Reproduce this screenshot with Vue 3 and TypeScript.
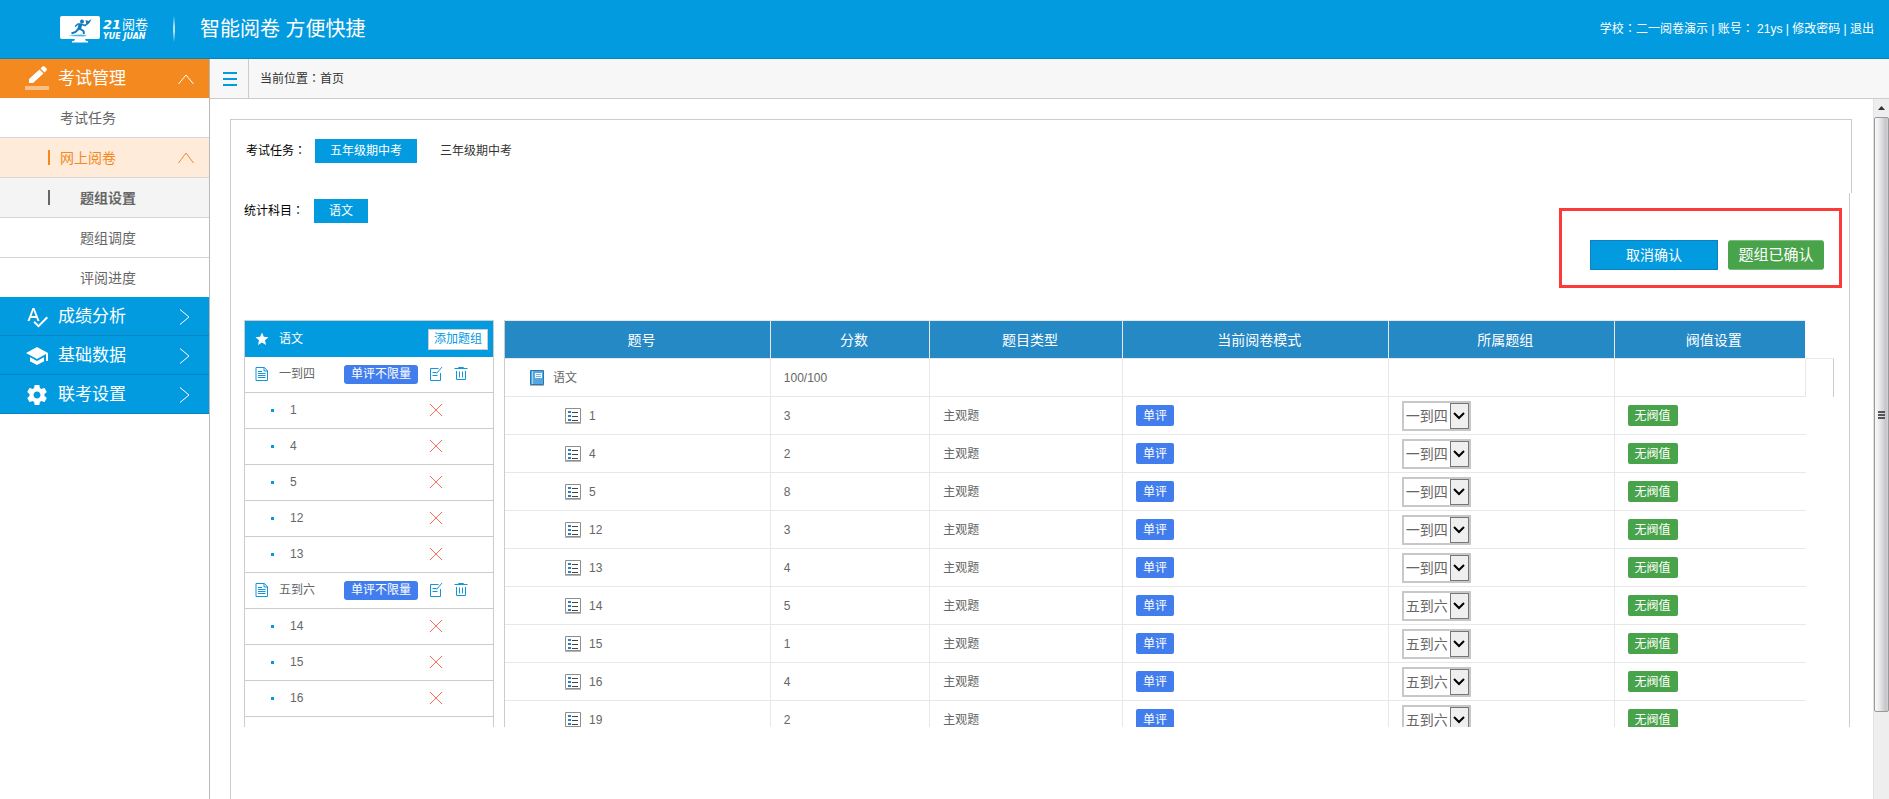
<script setup lang="ts">
import { ref } from 'vue'

interface Group {
  name: string
  items: string[]
}

interface Question {
  no: string
  score: number
  group: string
}

const groups: Group[] = [
  { name: '一到四', items: ['1', '4', '5', '12', '13'] },
  { name: '五到六', items: ['14', '15', '16'] },
]

const questions = ref<Question[]>([
  { no: '1', score: 3, group: '一到四' },
  { no: '4', score: 2, group: '一到四' },
  { no: '5', score: 8, group: '一到四' },
  { no: '12', score: 3, group: '一到四' },
  { no: '13', score: 4, group: '一到四' },
  { no: '14', score: 5, group: '五到六' },
  { no: '15', score: 1, group: '五到六' },
  { no: '16', score: 4, group: '五到六' },
  { no: '19', score: 2, group: '五到六' },
])
</script>

<template>
  <div class="app">
    <header class="top">
      <div class="logo">
        <svg class="logo-screen" width="40" height="27" viewBox="0 0 40 27">
          <path d="M2 0h36q2 0 2 2v19q0 2-2 2H25l1 2h2v1.500H12V25h2l1-2H2q-2 0-2-2V2q0-2 2-2z" fill="#fff" />
          <circle cx="22" cy="5.500" r="2" fill="#1379bd" />
          <path d="M15 10.500l3-2.500h3l4 1.500 3-2.500" fill="none" stroke="#1379bd" stroke-width="1.600" />
          <path d="M18.500 8h4l-1.500 5h-3.500z" fill="#1379bd" />
          <path d="M19 12.500l-3.500 3.500-4 1.500M19.500 12.500l4 2.500.5 3" fill="none" stroke="#1379bd" stroke-width="2" />
          <path d="M25.500 4l3 1 3-2-2 4-3 2z" fill="#1379bd" />
          <path d="M8 20q9-2.500 19-1l-3 1.500z" fill="#4db5e6" />
        </svg>
        <div class="logo-text">
          <div class="logo-line"><b>21</b><span>阅卷</span></div>
          <div class="logo-sub">YUE JUAN</div>
        </div>
      </div>
      <i class="top-divider"></i>
      <h1 class="slogan">智能阅卷 方便快捷</h1>
      <div class="account">
        学校<span class="colon">：</span>二一阅卷演示 | 账号<span class="colon">：</span> 21ys | <a href="#">修改密码</a> | <a href="#">退出</a>
      </div>
    </header>

    <div class="body">
      <nav class="side">
        <a href="#" class="main-item open">
          <svg class="main-icon" width="24" height="26" viewBox="0 0 24 26">
            <path d="M4 17v-4L14.500 3.500l4 4L8 17zM15.500 2.500L17.500 0.500q1-.8 2 0l2 2q.8 1 0 2l-2 2z" fill="#fff" />
            <path d="M0 20h24v4H0z" fill="#fff" opacity=".45" />
          </svg>
          <span>考试管理</span>
          <svg class="chev" width="16" height="16" viewBox="0 0 16 16"><path d="M.5 13L8 4l7.500 9" /></svg>
        </a>
        <a href="#" class="sub-item"><span>考试任务</span></a>
        <a href="#" class="sub-item current">
          <i class="mark"></i><span>网上阅卷</span>
          <svg class="chev" width="16" height="16" viewBox="0 0 16 16"><path d="M.5 13L8 3l7.500 10" /></svg>
        </a>
        <a href="#" class="sub-item deep selected"><i class="mark"></i><span>题组设置</span></a>
        <a href="#" class="sub-item deep"><span>题组调度</span></a>
        <a href="#" class="sub-item deep last"><span>评阅进度</span></a>
        <a href="#" class="main-item">
          <svg class="main-icon" width="24" height="24" viewBox="0 0 24 24">
            <path d="M12.450 16h2.090L9.430 3H7.570L2.460 16h2.090l1.120-3h5.640zm-6.020-5L8.500 5.480 10.570 11zm15.160.59l-8.090 8.090L9.830 16l-1.410 1.410 5.090 5.090L23 13z" fill="#fff" />
          </svg>
          <span>成绩分析</span>
          <svg class="chev" width="16" height="16" viewBox="0 0 16 16"><path d="M2 .5l9 7.500-9 7.500" /></svg>
        </a>
        <a href="#" class="main-item">
          <svg class="main-icon" width="24" height="24" viewBox="0 0 24 24">
            <path d="M5 13.180v4L12 21l7-3.820v-4L12 17zM12 3L1 9l11 6 9-4.910V17h2V9z" fill="#fff" />
          </svg>
          <span>基础数据</span>
          <svg class="chev" width="16" height="16" viewBox="0 0 16 16"><path d="M2 .5l9 7.500-9 7.500" /></svg>
        </a>
        <a href="#" class="main-item">
          <svg class="main-icon" width="24" height="24" viewBox="0 0 24 24">
            <path d="M19.430 12.980c.04-.32.07-.64.07-.98s-.03-.66-.07-.98l2.110-1.650c.19-.15.24-.42.12-.64l-2-3.460c-.12-.22-.39-.3-.61-.22l-2.490 1c-.52-.4-1.080-.73-1.690-.98l-.38-2.650C14.460 2.180 14.250 2 14 2h-4c-.25 0-.46.18-.49.42l-.38 2.650c-.61.25-1.170.59-1.690.98l-2.490-1c-.23-.09-.49 0-.61.22l-2 3.460c-.13.22-.07.49.12.64l2.110 1.650c-.04.32-.07.65-.07.98s.03.66.07.98l-2.110 1.650c-.19.15-.24.42-.12.64l2 3.460c.12.22.39.3.61.22l2.490-1c.52.4 1.080.73 1.690.98l.38 2.650c.03.24.24.42.49.42h4c.25 0 .46-.18.49-.42l.38-2.650c.61-.25 1.170-.59 1.690-.98l2.490 1c.23.09.49 0 .61-.22l2-3.460c.12-.22.07-.49-.12-.64zM12 15.500c-1.930 0-3.500-1.570-3.500-3.500s1.570-3.500 3.500-3.500 3.500 1.570 3.500 3.500-1.570 3.500-3.500 3.500z" fill="#fff" />
          </svg>
          <span>联考设置</span>
          <svg class="chev" width="16" height="16" viewBox="0 0 16 16"><path d="M2 .5l9 7.500-9 7.500" /></svg>
        </a>
      </nav>

      <div class="main">
        <div class="crumbs">
          <button class="burger" type="button" aria-label="菜单"><i></i><i></i><i></i></button>
          <div class="where">当前位置<span class="colon">：</span>首页</div>
        </div>

        <div class="view">
          <div class="panel">
            <section class="tasks">
              <span class="label">考试任务<span class="colon">：</span></span>
              <button class="tab on" type="button">五年级期中考</button>
              <button class="tab" type="button">三年级期中考</button>
            </section>

            <section class="subject">
              <div class="subject-row">
                <span class="label">统计科目<span class="colon">：</span></span>
                <button class="tab on" type="button">语文</button>
              </div>

              <div class="confirm">
                <button class="cancel" type="button">取消确认</button>
                <button class="done" type="button">题组已确认</button>
              </div>

              <div class="work">
                <div class="groups">
                  <div class="groups-head">
                    <svg class="lead" width="14" height="14" viewBox="0 0 14 14">
                      <path d="M7 .5l1.800 4.300 4.700.4L10 8.300l1 4.700-4-2.500L3 13l1-4.700L.5 5.200l4.700-.4z" fill="#fff" />
                    </svg>
                    <span>语文</span>
                    <button class="add" type="button">添加题组</button>
                  </div>
                  <template v-for="g in groups" :key="g.name">
                    <div class="group-row">
                      <svg class="lead" width="14" height="14" viewBox="0 0 14 14">
                        <path d="M1 .5h8.500L12.500 4v9.500H1zM9 1v3h3.500M3 4.500h4M3 6.500h7.500M3 8.500h7.500M3 10.500h7.500" fill="none" stroke="#1296db" />
                      </svg>
                      <span class="group-name">{{ g.name }}</span>
                      <button class="limit" type="button">单评不限量</button>
                      <button class="icon-btn" type="button" aria-label="编辑">
                        <svg width="14" height="16" viewBox="0 0 14 16">
                          <path d="M9.500 2.500h-8v12h10V7M3.500 6.500h4M3.500 9.500h5M7.500 7.500L13 1" fill="none" stroke="#1296db" />
                        </svg>
                      </button>
                      <button class="icon-btn trash" type="button" aria-label="删除">
                        <svg width="14" height="16" viewBox="0 0 14 16">
                          <path d="M4.500 2v-.5h5V2M.5 2.500h13M2.500 5v8.500h9V5M5.500 5.500v6M8.500 5.500v6" fill="none" stroke="#1296db" />
                        </svg>
                      </button>
                    </div>
                    <div v-for="n in g.items" :key="n" class="item-row">
                      <i class="dot"></i>
                      <span class="item-no">{{ n }}</span>
                      <button class="icon-btn" type="button" aria-label="移除">
                        <svg width="14" height="14" viewBox="0 0 14 14">
                          <path d="M1 1l12 12M13 1L1 13" fill="none" stroke="#f9735c" />
                        </svg>
                      </button>
                    </div>
                  </template>
                </div>

                <table class="grid">
                  <colgroup>
                    <col class="c-no" /><col class="c-score" /><col class="c-type" />
                    <col class="c-mode" /><col class="c-group" /><col class="c-limit" /><col class="c-end" />
                  </colgroup>
                  <thead>
                    <tr>
                      <th>题号</th>
                      <th>分数</th>
                      <th>题目类型</th>
                      <th>当前阅卷模式</th>
                      <th>所属题组</th>
                      <th>阀值设置</th>
                      <td class="spare"></td>
                    </tr>
                  </thead>
                  <tbody>
                    <tr class="total">
                      <td>
                        <div class="no root">
                          <svg width="14" height="16" viewBox="0 0 14 16">
                            <path d="M.5.5h13v14H.5z" fill="#54a8e2" stroke="#2d75b3" />
                            <path d="M2.500 1v13" stroke="#a9d3f0" />
                            <path d="M5 3h7v5H5z" fill="#f2f9fe" />
                            <path d="M6 4.500h5M6 6.500h5" stroke="#7db4dc" />
                            <path d="M0 15.500h14" stroke="#b5b5b5" />
                          </svg>
                          <span>语文</span>
                        </div>
                      </td>
                      <td>100/100</td>
                      <td></td>
                      <td></td>
                      <td></td>
                      <td></td>
                      <td class="spare"></td>
                    </tr>
                    <tr v-for="q in questions" :key="q.no">
                      <td>
                        <div class="no">
                          <svg width="16" height="16" viewBox="0 0 16 16">
                            <path d="M.5.5h15v14H.5z" fill="#fff" stroke="#8e8e8e" />
                            <path d="M0 15.500h16" stroke="#b5b5b5" />
                            <path d="M3 3h3v2H3zM3 7h3v2H3zM3 11h3v2H3z" fill="#2f7fc0" />
                            <path d="M7 4.500h6M7 8.500h6M7 12.500h6" stroke="#444" />
                          </svg>
                          <span>{{ q.no }}</span>
                        </div>
                      </td>
                      <td>{{ q.score }}</td>
                      <td>主观题</td>
                      <td><button class="badge blue" type="button">单评</button></td>
                      <td>
                        <div class="pick">
                          <select v-model="q.group" :aria-label="'所属题组 ' + q.no">
                            <option v-for="g in groups" :key="g.name" :value="g.name">{{ g.name }}</option>
                          </select>
                          <span class="pick-arrow">
                            <svg width="12" height="8" viewBox="0 0 12 8"><path d="M1 1l5 5 5-5" fill="none" stroke="#000" stroke-width="2" /></svg>
                          </span>
                        </div>
                      </td>
                      <td><button class="badge green" type="button">无阀值</button></td>
                      <td class="spare"></td>
                    </tr>
                  </tbody>
                </table>
              </div>
            </section>
          </div>

          <div class="scroll">
            <div class="scroll-up">
              <svg width="7" height="4" viewBox="0 0 7 4"><path d="M3.500 0L7 4H0z" fill="#333" /></svg>
            </div>
            <div class="thumb"><i></i><i></i><i></i></div>
          </div>
        </div>
      </div>
    </div>
  </div>
</template>

<style>
body {
  margin: 0;
  background: #fff;
}
</style>

<style scoped>
.app {
  display: flex;
  flex-direction: column;
  height: 100vh;
  overflow: hidden;
  font-family: 'Liberation Sans', 'Noto Sans CJK SC', sans-serif;
  font-size: 12px;
  line-height: 18px;
  color: #666;
}
.app *,
.app *::before {
  box-sizing: border-box;
}
a {
  color: inherit;
  text-decoration: none;
}
button {
  margin: 0;
  padding: 0;
  border: 0;
  background: none;
  font: inherit;
  color: inherit;
  cursor: pointer;
}
svg {
  display: block;
  flex: none;
}
/* full-width colon centred in its cell */
.colon {
  font-family: 'Noto Sans CJK TC', sans-serif;
  line-height: 12px;
}

/* header */
.top {
  display: flex;
  align-items: center;
  flex: none;
  height: 59px;
  padding: 0 15px 0 60px;
  border-bottom: 1px solid #0584c4;
  background: #039be0;
  color: #fff;
}
.logo {
  display: flex;
  gap: 3px;
  width: 113px;
}
.logo-line {
  display: flex;
  gap: 1px;
  height: 17px;
  line-height: 17px;
}
.logo-line b {
  font-family: 'DejaVu Sans', sans-serif;
  font-size: 13px;
  font-style: italic;
}
.logo-line span {
  font-size: 13px;
}
.logo-sub {
  font: italic bold 8px/8px 'DejaVu Sans', sans-serif;
  white-space: nowrap;
}
.top-divider {
  width: 2px;
  height: 26px;
  background: linear-gradient(#039be0, #b5e1f6 40%, #b5e1f6 60%, #039be0);
}
.slogan {
  flex: 1;
  margin: 0 0 0 25px;
  font-size: 20px;
  font-weight: 400;
  line-height: 28px;
}
.account {
  white-space: nowrap;
}

/* sidebar */
.body {
  display: flex;
  flex: 1;
  min-height: 0;
}
.side {
  flex: none;
  width: 210px;
  border-right: 1px solid #b9b9b9;
}
.main-item,
.sub-item {
  display: flex;
  align-items: center;
}
.main-item {
  gap: 9px;
  height: 39px;
  padding: 1px 15px 0 25px;
  border-bottom: 1px solid #0584c4;
  background: #039be0;
  color: #fff;
  font-size: 17px;
}
.main-item.open {
  border-bottom-color: #f3891f;
  background: #f3891f;
}
.chev {
  margin-left: auto;
  fill: none;
  stroke: #fff;
}
.sub-item {
  height: 40px;
  padding: 0 15px 0 48px;
  border-bottom: 1px solid #d6d6d6;
  font-size: 14px;
}
.sub-item span {
  margin-left: 12px;
}
.sub-item.deep span {
  margin-left: 32px;
}
.sub-item .mark + span {
  margin-left: 10px;
}
.sub-item.deep .mark + span {
  margin-left: 30px;
}
.sub-item.last {
  height: 39px;
  border-bottom: 0;
}
.mark {
  width: 2px;
  height: 15px;
  background: currentColor;
}
.current {
  background: #ffebda;
  color: #f3891f;
}
.current .chev {
  stroke: #f3891f;
}
.selected {
  background: #f4f4f4;
  font-weight: 700;
}

/* breadcrumb bar */
.main {
  display: flex;
  flex: 1;
  flex-direction: column;
  min-width: 0;
}
.crumbs {
  display: flex;
  flex: none;
  height: 40px;
  border-bottom: 1px solid #ccc;
  background: #f7f7f7;
  color: #333;
}
.burger {
  display: flex;
  flex-direction: column;
  justify-content: center;
  gap: 4px;
  width: 39px;
  padding: 0 11px 0 13px;
  border-right: 1px solid #ccc;
}
.burger i {
  width: 14px;
  height: 2px;
  background: #039be0;
}
.where {
  padding-left: 11px;
  line-height: 40px;
}

/* scrolling view */
.view {
  display: flex;
  flex: 1;
  min-height: 0;
}
.panel {
  display: flex;
  flex: 1;
  flex-direction: column;
  min-width: 0;
  margin: 20px 21px 0 20px;
  border-left: 1px solid #ccc;
}
.tasks {
  display: flex;
  flex: none;
  height: 74px;
  padding: 19px 0 0 15px;
  border: solid #ccc;
  border-width: 1px 1px 0 0;
}
.label {
  width: 69px;
  height: 24px;
  color: #000;
  line-height: 24px;
}
.tab {
  height: 24px;
  padding: 0 15px;
  color: #333;
  line-height: 24px;
}
.tab + .tab {
  margin-left: 8px;
}
.tab.on {
  background: #039be0;
  color: #fff;
}
.subject {
  display: flex;
  flex: 1;
  flex-direction: column;
  min-height: 0;
  margin: 0 2px 72px 0;
  padding: 6px 7px 0 13px;
  border-right: 1px solid #ccc;
}
.subject-row {
  display: flex;
}
.subject-row .label {
  width: 70px;
}
.confirm {
  display: flex;
  flex: none;
  align-self: flex-end;
  align-items: flex-end;
  justify-content: center;
  gap: 10px;
  width: 283px;
  height: 80px;
  margin: -15px 0 32px;
  padding: 0 0 15px 13px;
  border: 3px solid #fd3a3a;
}
.cancel,
.done {
  height: 30px;
  color: #fff;
}
.cancel {
  width: 128px;
  border: 1px solid #0d82bf;
  background: #039be0;
  font-size: 14px;
}
.done {
  width: 96px;
  border: solid #79bd7b;
  border-width: 1px 0;
  border-radius: 3px;
  background: #48a34a;
  font-size: 15px;
}

/* groups and questions */
.work {
  display: flex;
  flex: 1;
  align-items: flex-start;
  gap: 10px;
  min-height: 0;
  margin-right: 8px;
  overflow: hidden;
}
.groups {
  flex: none;
  width: 250px;
  min-height: 100%;
  border: 1px solid #ccc;
  border-bottom: 0;
}
.groups-head,
.group-row,
.item-row {
  display: flex;
  align-items: center;
  height: 36px;
  padding-left: 10px;
}
.groups-head {
  padding-right: 5px;
  background: #039be0;
  color: #fff;
}
.group-row,
.item-row {
  padding-bottom: 1px;
  border-bottom: 1px solid #ccc;
}
.lead {
  margin-right: 10px;
}
.add {
  height: 21px;
  margin-left: auto;
  padding: 0 5px;
  border: 1px solid #ccc;
  background: #fff;
  color: #039be0;
  line-height: 18px;
}
.group-name {
  width: 65px;
}
.limit {
  width: 74px;
  height: 19px;
  margin-right: 11px;
  border-radius: 3px;
  background: #417ded;
  color: #fff;
}
.icon-btn {
  width: 14px;
}
.trash {
  margin-left: 11px;
}
.dot {
  width: 3px;
  height: 3px;
  margin: 0 16px;
  background: #039be0;
}
.item-no {
  width: 139px;
}

.grid {
  flex: 1;
  width: 100%;
  min-width: 0;
  border-left: 1px solid #ccc;
  border-spacing: 0;
  table-layout: fixed;
}
.c-no { width: 20%; }
.c-score { width: 12%; }
.c-type { width: 14.5%; }
.c-mode { width: 20%; }
.c-group { width: 17%; }
.c-limit { width: 14.4%; }
.c-end { width: 28px; }
.grid th {
  height: 39px;
  padding: 0 0 0 8px;
  border: solid #e8e8e8;
  border-width: 1px 1px 1px 0;
  background: #2589c6;
  color: #fff;
  font-size: 14px;
  font-weight: 400;
}
.grid th:nth-child(6) {
  border-right-color: #fff;
}
.grid td {
  height: 38px;
  padding: 0 0 0 13px;
  border: solid #e8e8e8;
  border-width: 0 1px 1px 0;
}
.grid thead .spare {
  height: 39px;
  padding: 0;
  border-right: 0;
}
.grid tbody tr:not(.total) td:nth-child(6) {
  border-right: 0;
}
.grid tbody .spare {
  padding: 0;
  border-width: 0;
}
.grid .total .spare {
  border-right: 1px solid #ccc;
}
.no {
  display: flex;
  align-items: center;
  gap: 8px;
  padding-left: 47px;
}
.no.root {
  gap: 9px;
  padding-left: 12px;
}
.badge {
  display: block;
  height: 21px;
  padding: 0 7px;
  border-radius: 2px;
  color: #fff;
}
.blue {
  background: #417ded;
}
.green {
  background: #48a34a;
}
.pick {
  display: flex;
  width: 69px;
  height: 30px;
  border: 2px solid #c8c8c8;
}
.pick select {
  flex: 1;
  min-width: 0;
  padding: 0 0 0 2px;
  border: 0;
  outline: 0;
  background: #fff;
  appearance: none;
  color: #666;
  font: inherit;
  font-size: 14px;
}
.pick-arrow {
  display: flex;
  align-items: center;
  justify-content: center;
  width: 19px;
  border: 1px solid #777;
  background: #efefef;
  pointer-events: none;
}

/* scrollbar */
.scroll {
  display: flex;
  flex: none;
  flex-direction: column;
  width: 16px;
  border-left: 1px solid #e3e3e3;
  background: #eee;
}
.scroll-up {
  display: flex;
  align-items: center;
  justify-content: center;
  height: 18px;
}
.thumb {
  display: flex;
  flex-direction: column;
  align-items: center;
  justify-content: center;
  gap: 1px;
  height: 85%;
  border: 1px solid #999;
  border-radius: 2px;
  background: linear-gradient(90deg, #fafafa, #e6e6e8 40%, #c4c4c9 85%, #d5d5d8);
}
.thumb i {
  width: 7px;
  height: 2px;
  background: #555;
}
</style>
